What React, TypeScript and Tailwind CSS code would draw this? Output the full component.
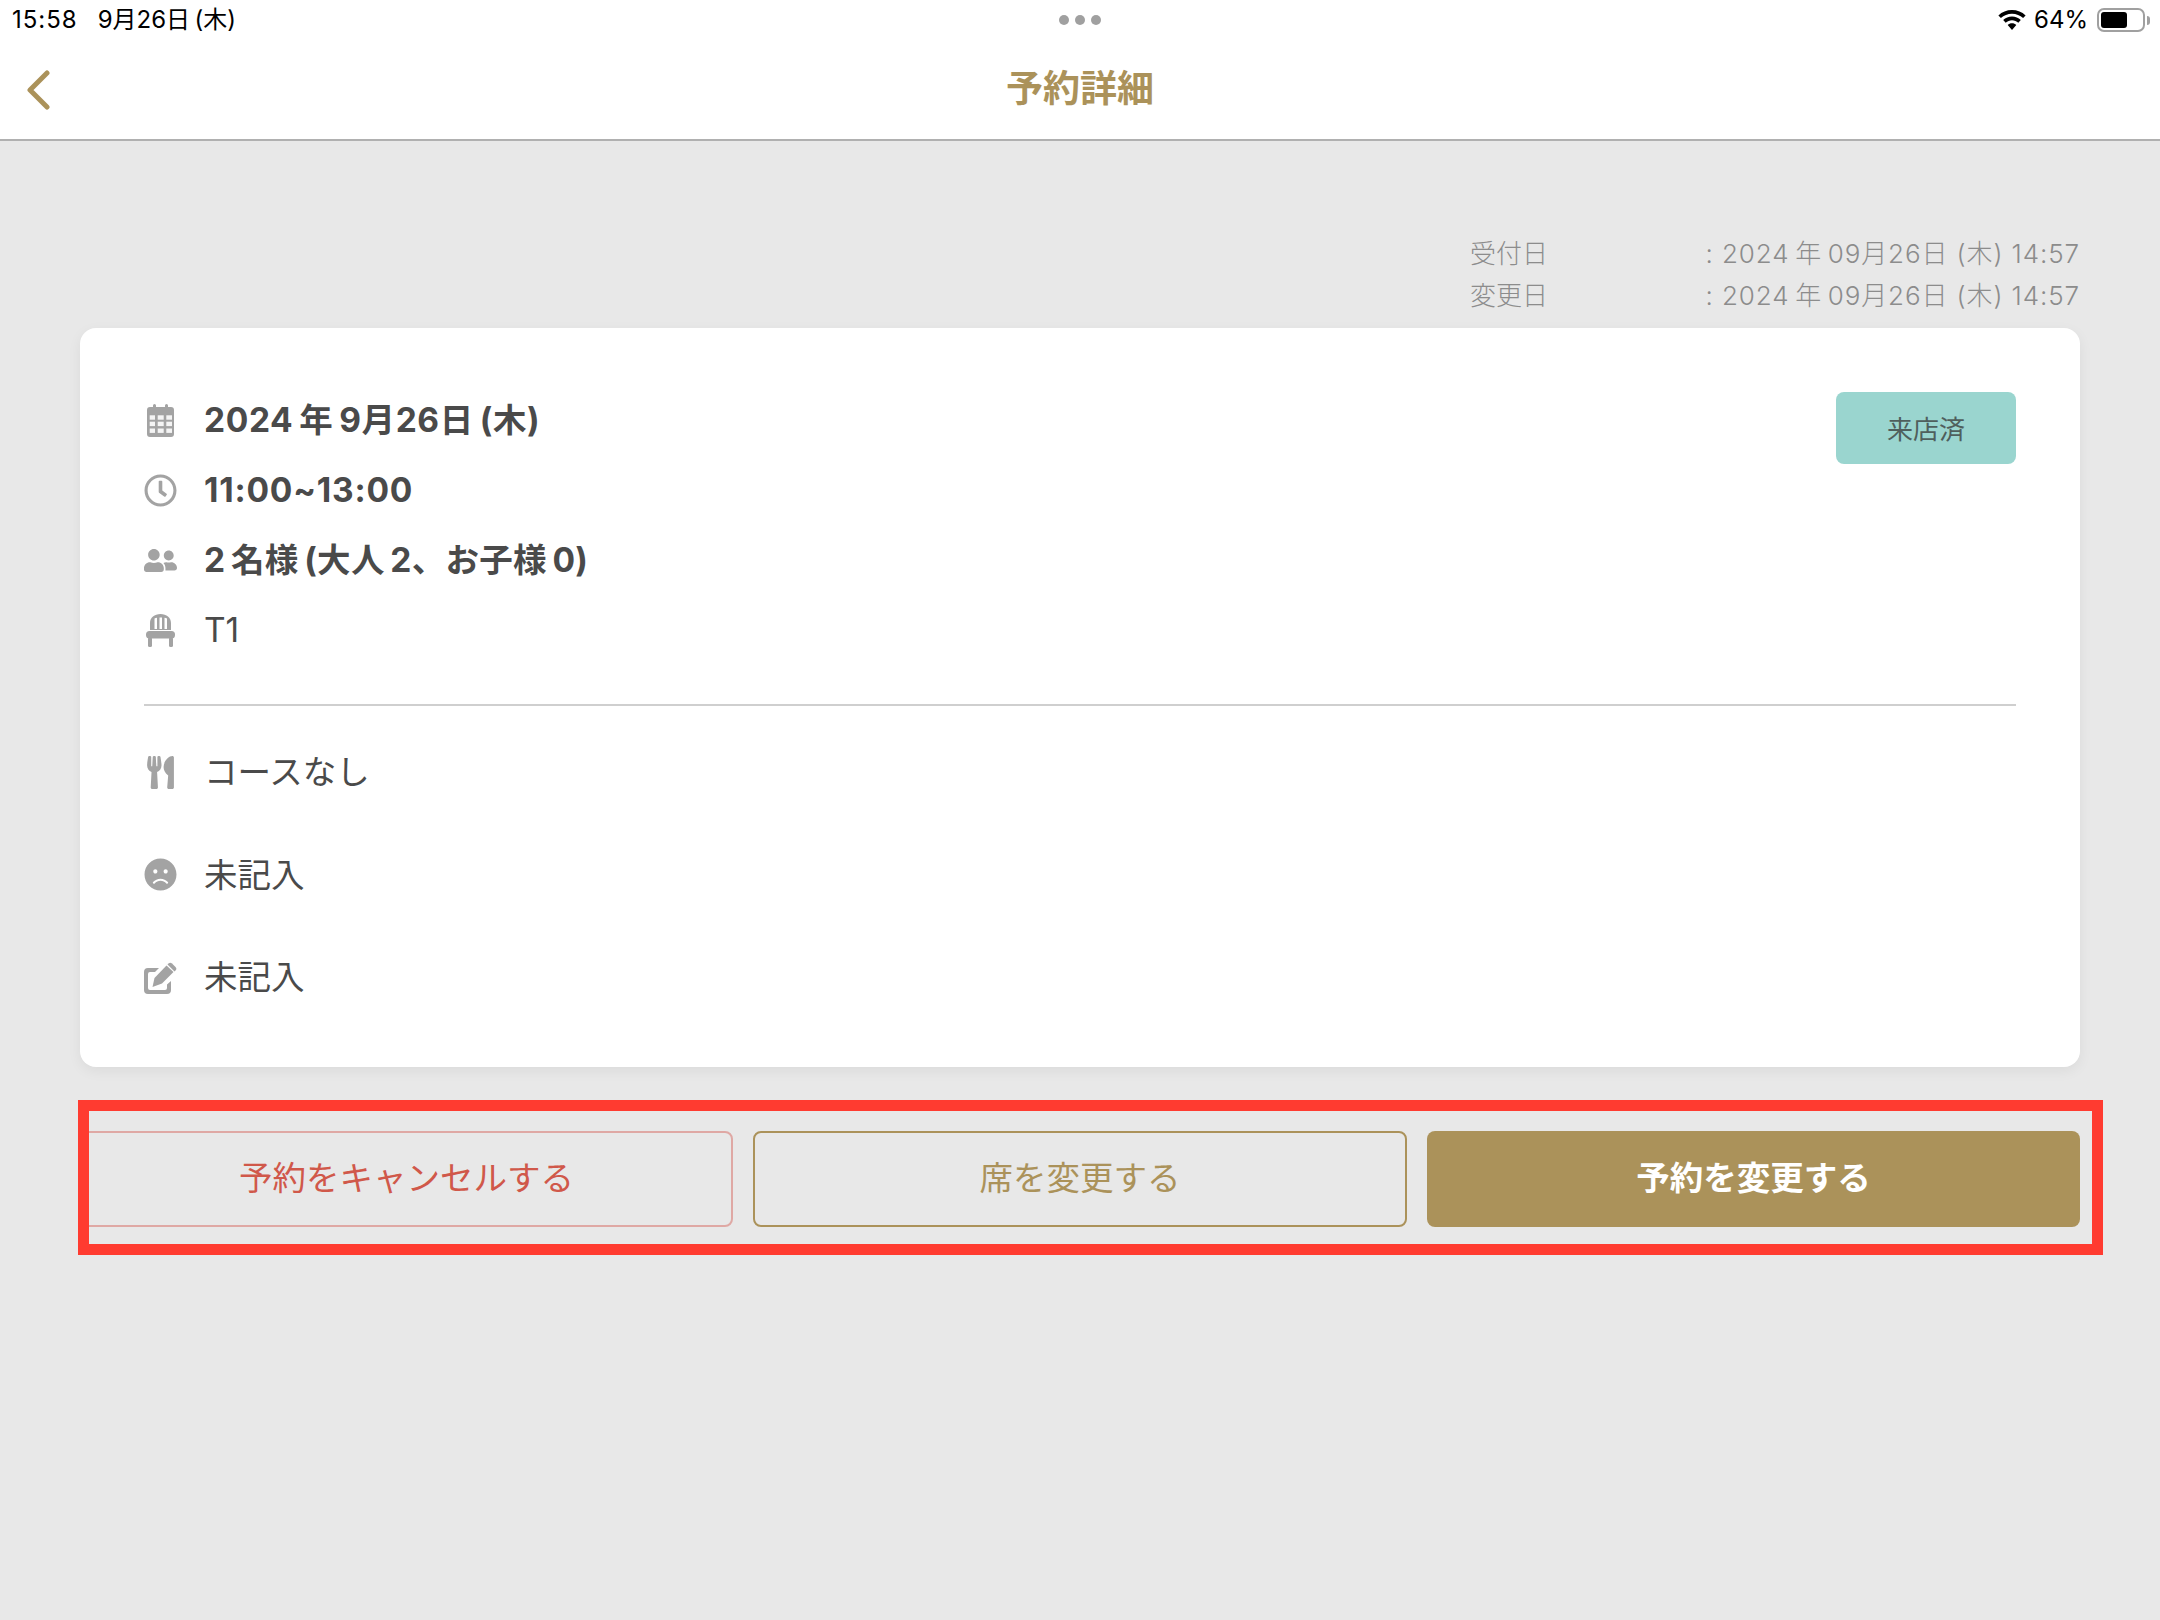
import React from 'react';
import { FaRegClock, FaUtensils, FaFrown, FaUserFriends } from 'react-icons/fa';

const fontStack = "font-['Inter','Noto_Sans_CJK_JP',sans-serif]";

function CalendarIcon() {
    return (
        <svg viewBox="10 7 27 33" className="w-[27px] h-[33px]">
            <path fill="#a3a3a3" d="M13 10h3V8.500a1.500 1.500 0 0 1 3 0V10h9V8.500a1.500 1.500 0 0 1 3 0V10h3a3 3 0 0 1 3 3v24a3 3 0 0 1-3 3H13a3 3 0 0 1-3-3V13a3 3 0 0 1 3-3z" />
            <g fill="#f4f4f4">
                <rect x="12.700" y="18.300" width="5.300" height="4.400" />
                <rect x="20.700" y="18.300" width="6" height="4.400" />
                <rect x="29.300" y="18.300" width="5.700" height="4.400" />
                <rect x="12.700" y="24.700" width="5.300" height="4.400" />
                <rect x="20.700" y="24.700" width="6" height="4.400" />
                <rect x="29.300" y="24.700" width="5.700" height="4.400" />
                <rect x="12.700" y="31.500" width="5.300" height="4.400" />
                <rect x="20.700" y="31.500" width="6" height="4.400" />
                <rect x="29.300" y="31.500" width="5.700" height="4.400" />
            </g>
        </svg>
    );
}

function ChairIcon() {
    return (
        <svg viewBox="10 6 29 33" className="w-[29px] h-[33px]" fill="#a3a3a3">
            <path fillRule="evenodd" d="M14 22V15c0-5.500 4.500-9 10.500-9S35 9.500 35 15v7zM18.500 10.500v10.500h2.500V9.700c-.9.200-1.800.400-2.500.800zm5 -1v11.500H26V9.500zm5 .200v11.300H31V10.500c-.7-.4-1.600-.6-2.500-.8z" />
            <rect x="10" y="23" width="29" height="7.500" rx="3.500" />
            <rect x="12" y="29" width="4" height="10" rx="1.500" />
            <rect x="33" y="29" width="4" height="10" rx="1.500" />
        </svg>
    );
}

function EditIcon() {
    return (
        <svg viewBox="8 6 33 33" className="w-[33px] h-[33px]" fill="#a3a3a3">
            <path d="M23 13H12a4 4 0 0 0-4 4v18a4 4 0 0 0 4 4h19a4 4 0 0 0 4-4V26l-4 3.500V33a2 2 0 0 1-2 2H14a2 2 0 0 1-2-2V19a2 2 0 0 1 2-2h5z" />
            <path d="M16.500 32 18.500 23 30.500 10.500 37.500 17 26 28.500z" />
            <path d="M32.500 8.500a2.500 2.500 0 0 1 3.500 0l3.500 3.500a2.500 2.500 0 0 1 0 3.500l-1 1-7-7z" />
        </svg>
    );
}

function Row({ icon, children, className }: { icon: React.ReactNode; children: React.ReactNode; className: string }) {
    return (
        <div className={`flex items-center ${className}`}>
            <div className="w-[33px] flex justify-center text-[#a3a3a3]">{icon}</div>
            <div className="ml-[27px] text-[#4a4a4a] text-[33.500px]">{children}</div>
        </div>
    );
}

export default function App() {
    return (
        <div className={`min-h-[1620px] bg-[#e8e8e8] ${fontStack}`}>
            <header className="bg-white border-b-2 border-[#b0b0b0] h-[141px]">
                <div className="relative flex items-center h-[40px] pl-[12px] pr-[10px] text-[24px] text-black">
                    <span className="tracking-[1px]">15:58</span>
                    <span className="ml-[20px]">9月26日{'\u2009'}(木)</span>
                    <div className="absolute left-[1059px] top-[15px] flex gap-[6px]">
                        <span className="w-[10px] h-[10px] rounded-full bg-[#a0a0a0]" />
                        <span className="w-[10px] h-[10px] rounded-full bg-[#a0a0a0]" />
                        <span className="w-[10px] h-[10px] rounded-full bg-[#a0a0a0]" />
                    </div>
                    <div className="ml-auto flex items-center">
                        <svg viewBox="0 0 28 20" className="w-[28px] h-[20px]" fill="black">
                            <path d="M14 0C8.700 0 4 2 .4 5.400l2.500 2.700C5.900 5.300 9.700 3.700 14 3.700s8.100 1.600 11.100 4.400l2.500-2.700C24 2 19.300 0 14 0z" />
                            <path d="M14 6.600c-3.400 0-6.500 1.300-8.800 3.500l2.500 2.700c1.700-1.500 3.900-2.500 6.300-2.500s4.600 1 6.300 2.500l2.500-2.700c-2.300-2.200-5.400-3.500-8.800-3.500z" />
                            <path d="M14 13.200c-1.700 0-3.200.6-4.300 1.700L14 20l4.300-5.100c-1.100-1.100-2.600-1.700-4.300-1.700z" />
                        </svg>
                        <span className="ml-[8px]">64%</span>
                        <div className="ml-[9px] w-[48px] h-[24px] rounded-[7px] border-2 border-[#a0a0a0] p-[2px]">
                            <div className="w-[26px] h-full rounded-[3px] bg-black" />
                        </div>
                        <div className="ml-[2px] w-[3px] h-[9px] rounded-r-full bg-[#a0a0a0]" />
                    </div>
                </div>
                <div className="relative flex items-center justify-center h-[98px] pb-[1px]">
                    <svg viewBox="0 0 24 40" className="absolute left-[26px] top-[30px] w-[24px] h-[40px]" fill="none" stroke="#ab925a" strokeWidth="5" strokeLinecap="round" strokeLinejoin="round">
                        <path d="M21 3 4 20l17 17" />
                    </svg>
                    <h1 className="text-[37px] font-bold text-[#ab925a]">予約詳細</h1>
                </div>
            </header>

            <main className="px-20 pt-[91px]">
                <div className="flex flex-col items-end text-[26px] text-[#8c8c8c] font-light">
                    <div className="w-[610px] flex h-[42px] items-center">
                        <span className="w-[236px]">受付日</span>
                        <span className="whitespace-nowrap tracking-[0.9px]">: 2024{'\u2009'}年{'\u2009'}09月26日 (木) 14:57</span>
                    </div>
                    <div className="w-[610px] flex h-[42px] items-center">
                        <span className="w-[236px]">変更日</span>
                        <span className="whitespace-nowrap tracking-[0.9px]">: 2024{'\u2009'}年{'\u2009'}09月26日 (木) 14:57</span>
                    </div>
                </div>

                <section className="mt-3 h-[739px] bg-white rounded-[16px] shadow-[0_4px_14px_rgba(0,0,0,0.06)] px-16 pt-[57px]">
                    <div className="flex justify-between border-b-2 border-[#cfcfcf] pb-[39px]">
                        <div>
                            <Row className="h-[70px] font-bold tracking-[0.6px]" icon={<CalendarIcon />}>2024{'\u2009'}年{'\u2009'}9月26日{'\u2009'}(木)</Row>
                            <Row className="h-[70px] font-bold tracking-[0.8px]" icon={<FaRegClock size={33} />}>11:00~13:00</Row>
                            <Row className="h-[70px] font-bold tracking-[0.3px]" icon={<FaUserFriends size={33} />}>2{'\u2009'}名様{'\u2009'}(大人{'\u2009'}2、お子様{'\u2009'}0)</Row>
                            <Row className="h-[70px]" icon={<ChairIcon />}>T1</Row>
                        </div>
                        <div className="mt-[7px] w-[180px] h-[72px] pt-[2px] rounded-[8px] bg-[#9ad5cf] flex items-center justify-center text-[26px] text-[#4f5f5d]">
                            来店済
                        </div>
                    </div>
                    <div className="pt-[15px]">
                        <Row className="h-[102.500px]" icon={<FaUtensils size={33} />}>コースなし</Row>
                        <Row className="h-[102.500px]" icon={<FaFrown size={33} />}>未記入</Row>
                        <Row className="h-[102.500px]" icon={<EditIcon />}>未記入</Row>
                    </div>
                </section>

                <div className="relative mt-16 flex gap-5 h-[96px] text-[33.500px]">
                    <button className="w-[653px] pb-[2px] rounded-[8px] border-2 border-[#dfa8a4] text-[#d0584a]">予約をキャンセルする</button>
                    <button className="w-[654px] pb-[2px] rounded-[8px] border-2 border-[#ab925a] text-[#ab925a]">席を変更する</button>
                    <button className="w-[653px] pb-[2px] rounded-[8px] bg-[#ab925a] text-white font-bold">予約を変更する</button>
                    {/* annotation frame over the buttons */}
                    <div className="absolute -left-[2px] -right-[23px] -top-[31px] -bottom-[28px] border-[11px] border-[#ff3b30]" />
                </div>
            </main>
        </div>
    );
}
